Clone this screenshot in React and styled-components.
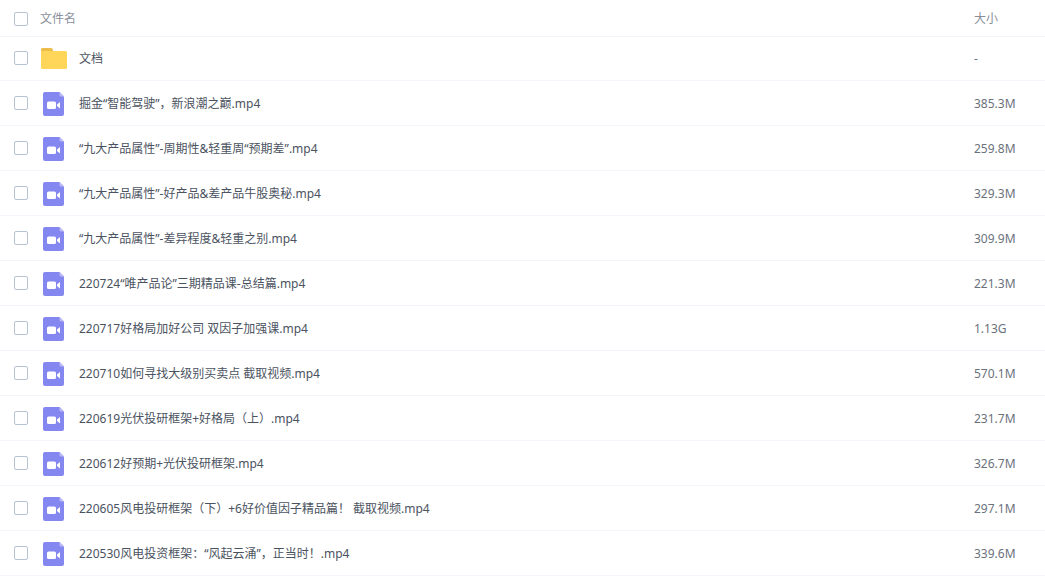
import React from 'react'
import styled, { createGlobalStyle } from 'styled-components'

const Global = createGlobalStyle`
  html, body { margin: 0; padding: 0; background: #fff; }
  body { font-family: "Noto Sans", "Noto Sans CJK SC", sans-serif; font-size: 12px; overflow: hidden; }
`

const List = styled.div`
  width: 1045px;
  height: 581px;
  overflow: hidden;
`

const Row = styled.div`
  display: flex;
  align-items: center;
  box-sizing: border-box;
  height: ${p => p.$height}px;
  padding: 0 0 ${p => p.$bottom || 0}px 14px;
  border-bottom: 1px solid #f2f5fa;
`

const Check = styled.span`
  flex: none;
  box-sizing: border-box;
  width: 14px;
  height: 14px;
  margin-top: ${p => p.$top || 0}px;
  border: 1px solid #b6c3d3;
  border-radius: 2px;
`

const IconCell = styled.span`
  flex: none;
  display: flex;
  width: 26px;
  box-sizing: border-box;
  padding-left: ${p => p.$inset || 0}px;
  margin: ${p => p.$top || 0}px 12px 0 13px;
`

const HeadName = styled.span`
  flex: 1;
  margin-left: 12px;
  color: #8a8f99;
`

const Name = styled.span`
  flex: 1;
  color: #4b5361;
  white-space: pre;
`

const Size = styled.span`
  flex: none;
  width: 71px;
  color: ${p => p.$head ? '#8a8f99' : '#6b727d'};
`

const FolderIcon = () => (
  <svg width="26" height="21" viewBox="0 0 26 21">
    <path d="M0 1.500A1.500 1.500 0 0 1 1.500 0H10a2 2 0 0 1 2 2v4H0z" fill="#edbd4c" />
    <path d="M1 3h23.500A1.500 1.500 0 0 1 26 4.500v15a1.500 1.500 0 0 1-1.500 1.500h-23A1.500 1.500 0 0 1 0 19.500V4a1 1 0 0 1 1-1z" fill="#ffd659" />
  </svg>
)

const VideoIcon = () => (
  <svg width="21" height="24" viewBox="0 0 21 24">
    <path d="M2 0h14.500L21 4.500V22a2 2 0 0 1-2 2H2a2 2 0 0 1-2-2V2a2 2 0 0 1 2-2z" fill="#8587f0" />
    <path d="M16.500 0L21 4.500h-3a1.500 1.500 0 0 1-1.500-1.500z" fill="#b9baf6" />
    <rect x="4" y="9.500" width="9" height="7.500" rx="1.500" fill="#fff" />
    <path d="M14 12.500l3-2.400v6.300L14 14z" fill="#fff" />
  </svg>
)

const files = [
  ['掘金“智能驾驶”，新浪潮之巅.mp4', '385.3M'],
  ['“九大产品属性”-周期性&轻重周“预期差”.mp4', '259.8M'],
  ['“九大产品属性”-好产品&差产品牛股奥秘.mp4', '329.3M'],
  ['“九大产品属性”-差异程度&轻重之别.mp4', '309.9M'],
  ['220724“唯产品论”三期精品课-总结篇.mp4', '221.3M'],
  ['220717好格局加好公司 双因子加强课.mp4', '1.13G'],
  ['220710如何寻找大级别买卖点 截取视频.mp4', '570.1M'],
  ['220619光伏投研框架+好格局（上）.mp4', '231.7M'],
  ['220612好预期+光伏投研框架.mp4', '326.7M'],
  ['220605风电投研框架（下）+6好价值因子精品篇！ 截取视频.mp4', '297.1M'],
  ['220530风电投资框架：“风起云涌”，正当时！.mp4', '339.6M'],
]

export default function App() {
  return (
    <List>
      <Global />
      <Row $height={37}>
        <Check $top={2} />
        <HeadName>文件名</HeadName>
        <Size $head>大小</Size>
      </Row>
      <Row $height={44} $bottom={1}>
        <Check />
        <IconCell $top={1}><FolderIcon /></IconCell>
        <Name>文档</Name>
        <Size>-</Size>
      </Row>
      {files.map(([name, size]) => (
        <Row $height={45} key={name}>
          <Check />
          <IconCell $top={2} $inset={2}><VideoIcon /></IconCell>
          <Name>{name}</Name>
          <Size>{size}</Size>
        </Row>
      ))}
    </List>
  )
}
